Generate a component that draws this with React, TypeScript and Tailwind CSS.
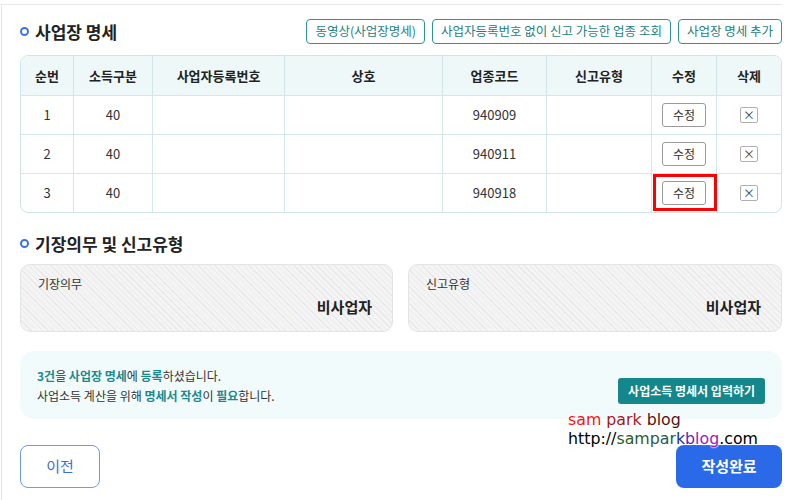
import React from 'react';

const FONT = "font-['Noto_Sans_CJK_KR','Noto_Sans',sans-serif]";

const rows = [
  { no: 1, kind: '40', code: '940909' },
  { no: 2, kind: '40', code: '940911' },
  { no: 3, kind: '40', code: '940918' },
];

const headers = ['순번', '소득구분', '사업자등록번호', '상호', '업종코드', '신고유형', '수정', '삭제'];

const cols = 'grid grid-cols-[52px_79px_132px_158px_104px_105px_65px_1fr]';

// Section title with blue ring bullet
const SectionTitle = ({ children }: { children: React.ReactNode }) => (
  <div className="flex items-center gap-[6px]">
    <span className="w-[9px] h-[9px] rounded-full border-[2.5px] border-[#3a72e8]" />
    <span className="text-[17px] font-bold text-[#222] leading-none">{children}</span>
  </div>
);

const OutlineButton = ({ children }: { children: React.ReactNode }) => (
  <button className="h-[25px] px-[8px] rounded-[4px] border border-[#2a9598] text-[12.5px] text-[#1d7f83] bg-white leading-none">
    {children}
  </button>
);

const InfoBox = ({ label, value }: { label: string; value: string }) => (
  <div className="h-[68px] rounded-[10px] border border-[#e4e4e6] bg-[repeating-linear-gradient(45deg,#f4f4f4_0px,#f4f4f4_3px,#e9e9e9_3px,#e9e9e9_4px)] px-[17px] pt-[10px] flex flex-col">
    <span className="text-[12px] text-[#333]">{label}</span>
    <span className="self-end pr-[3px] mt-[3px] text-[15px] font-bold text-[#222]">{value}</span>
  </div>
);

export default function App() {
  return (
    <div className={`w-[800px] h-[500px] bg-white overflow-hidden relative ${FONT}`}>
      <div className="h-[4px]" />
      <div className="mr-[18px] border-t border-[#e7e8ec]" />
      <div className="ml-[1px] border-l border-[#dfe5f6] pl-[18px] pr-[18px] pt-[14px] pb-[20px]">
        {/* Section 1 header */}
        <div className="flex items-center justify-between h-[25px]">
          <SectionTitle>사업장 명세</SectionTitle>
          <div className="flex gap-[7px]">
            <OutlineButton>동영상(사업장명세)</OutlineButton>
            <OutlineButton>사업자등록번호 없이 신고 가능한 업종 조회</OutlineButton>
            <OutlineButton>사업장 명세 추가</OutlineButton>
          </div>
        </div>

        {/* Table */}
        <div className="mt-[11px] rounded-[8px] border border-[#cfe5e7] overflow-hidden text-[13px] text-[#333]">
          <div className={`${cols} h-[39px] bg-[#eef8f8] font-bold text-[#222]`}>
            {headers.map((h, i) => (
              <div
                key={h}
                className={`flex items-center justify-center ${i > 0 ? 'border-l border-[#cfe5e7]' : ''}`}
              >
                {h}
              </div>
            ))}
          </div>
          {rows.map((r) => (
            <div key={r.no} className={`${cols} h-[39px] border-t border-[#d3e8ea]`}>
              <div className="flex items-center justify-center">{r.no}</div>
              <div className="flex items-center justify-center border-l border-[#d3e8ea]">{r.kind}</div>
              <div className="border-l border-[#d3e8ea]" />
              <div className="border-l border-[#d3e8ea]" />
              <div className="flex items-center justify-center border-l border-[#d3e8ea]">{r.code}</div>
              <div className="border-l border-[#d3e8ea]" />
              <div className="relative flex items-center justify-center border-l border-[#d3e8ea]">
                <button className="w-[44px] h-[24px] rounded-[3px] border border-[#9a9a9a] bg-white text-[12px] text-[#333] leading-none">
                  수정
                </button>
                {r.no === 3 && (
                  <span className="absolute left-[1px] top-0 w-[64px] h-[37px] border-[3px] border-[#ff0000]" />
                )}
              </div>
              <div className="flex items-center justify-center border-l border-[#d3e8ea]">
                <span className="w-[18px] h-[16px] rounded-[2px] border border-[#b0b0b0] bg-white flex items-center justify-center text-[12px] leading-none text-[#444]">
                  ×
                </span>
              </div>
            </div>
          ))}
        </div>

        {/* Section 2 */}
        <div className="mt-[22px]">
          <SectionTitle>기장의무 및 신고유형</SectionTitle>
        </div>
        <div className="mt-[12px] grid grid-cols-[373px_1fr] gap-[15px]">
          <InfoBox label="기장의무" value="비사업자" />
          <InfoBox label="신고유형" value="비사업자" />
        </div>

        {/* Notice box */}
        <div className="mt-[19px] h-[68px] rounded-[14px] bg-[#f2fbfb] pl-[17px] pr-[17px] flex items-center justify-between">
          <div className="text-[12px] leading-[20px] text-[#333] pt-[1px]">
            <div>
              <b className="text-[#1b8a8e]">3건</b>을 <b className="text-[#1b8a8e]">사업장 명세</b>에{' '}
              <b className="text-[#1b8a8e]">등록</b>하셨습니다.
            </div>
            <div>
              사업소득 계산을 위해 <b className="text-[#1b8a8e]">명세서 작성</b>이{' '}
              <b className="text-[#1b8a8e]">필요</b>합니다.
            </div>
          </div>
          <button className="mt-[12px] h-[26px] px-[10px] rounded-[3px] bg-[#13878b] text-white text-[12px] font-bold leading-none">
            사업소득 명세서 입력하기
          </button>
        </div>

        {/* Bottom buttons */}
        <div className="mt-[26px] flex justify-between">
          <button className="w-[80px] h-[43px] rounded-[8px] border border-[#6d9bf0] bg-white text-[15px] text-[#3a6ee0]">
            이전
          </button>
          <button className="w-[106px] h-[43px] rounded-[8px] bg-[#2a6ae8] text-white text-[15px] font-bold">
            작성완료
          </button>
        </div>
      </div>

      {/* Watermark overlay */}
      <div className="absolute left-[568px] top-[410px] font-['DejaVu_Sans',sans-serif] text-[15.8px] leading-[19px] [text-shadow:0_0_2px_#fff,0_0_2px_#fff,0_0_2px_#fff]">
        <div>
          <span className="text-[#ff1010]">sam </span>
          <span className="text-[#a81818]">park </span>
          <span className="text-[#5a1010]">blog</span>
        </div>
        <div>
          <span className="text-black">http://</span>
          <span className="text-[#2a5e2a]">sam</span>
          <span className="text-[#1f5a55]">par</span>
          <span className="text-[#1e2f8a]">k</span>
          <span className="text-[#5a2ab0]">b</span>
          <span className="text-[#9a20b8]">log</span>
          <span className="text-black">.com</span>
        </div>
      </div>
    </div>
  );
}
